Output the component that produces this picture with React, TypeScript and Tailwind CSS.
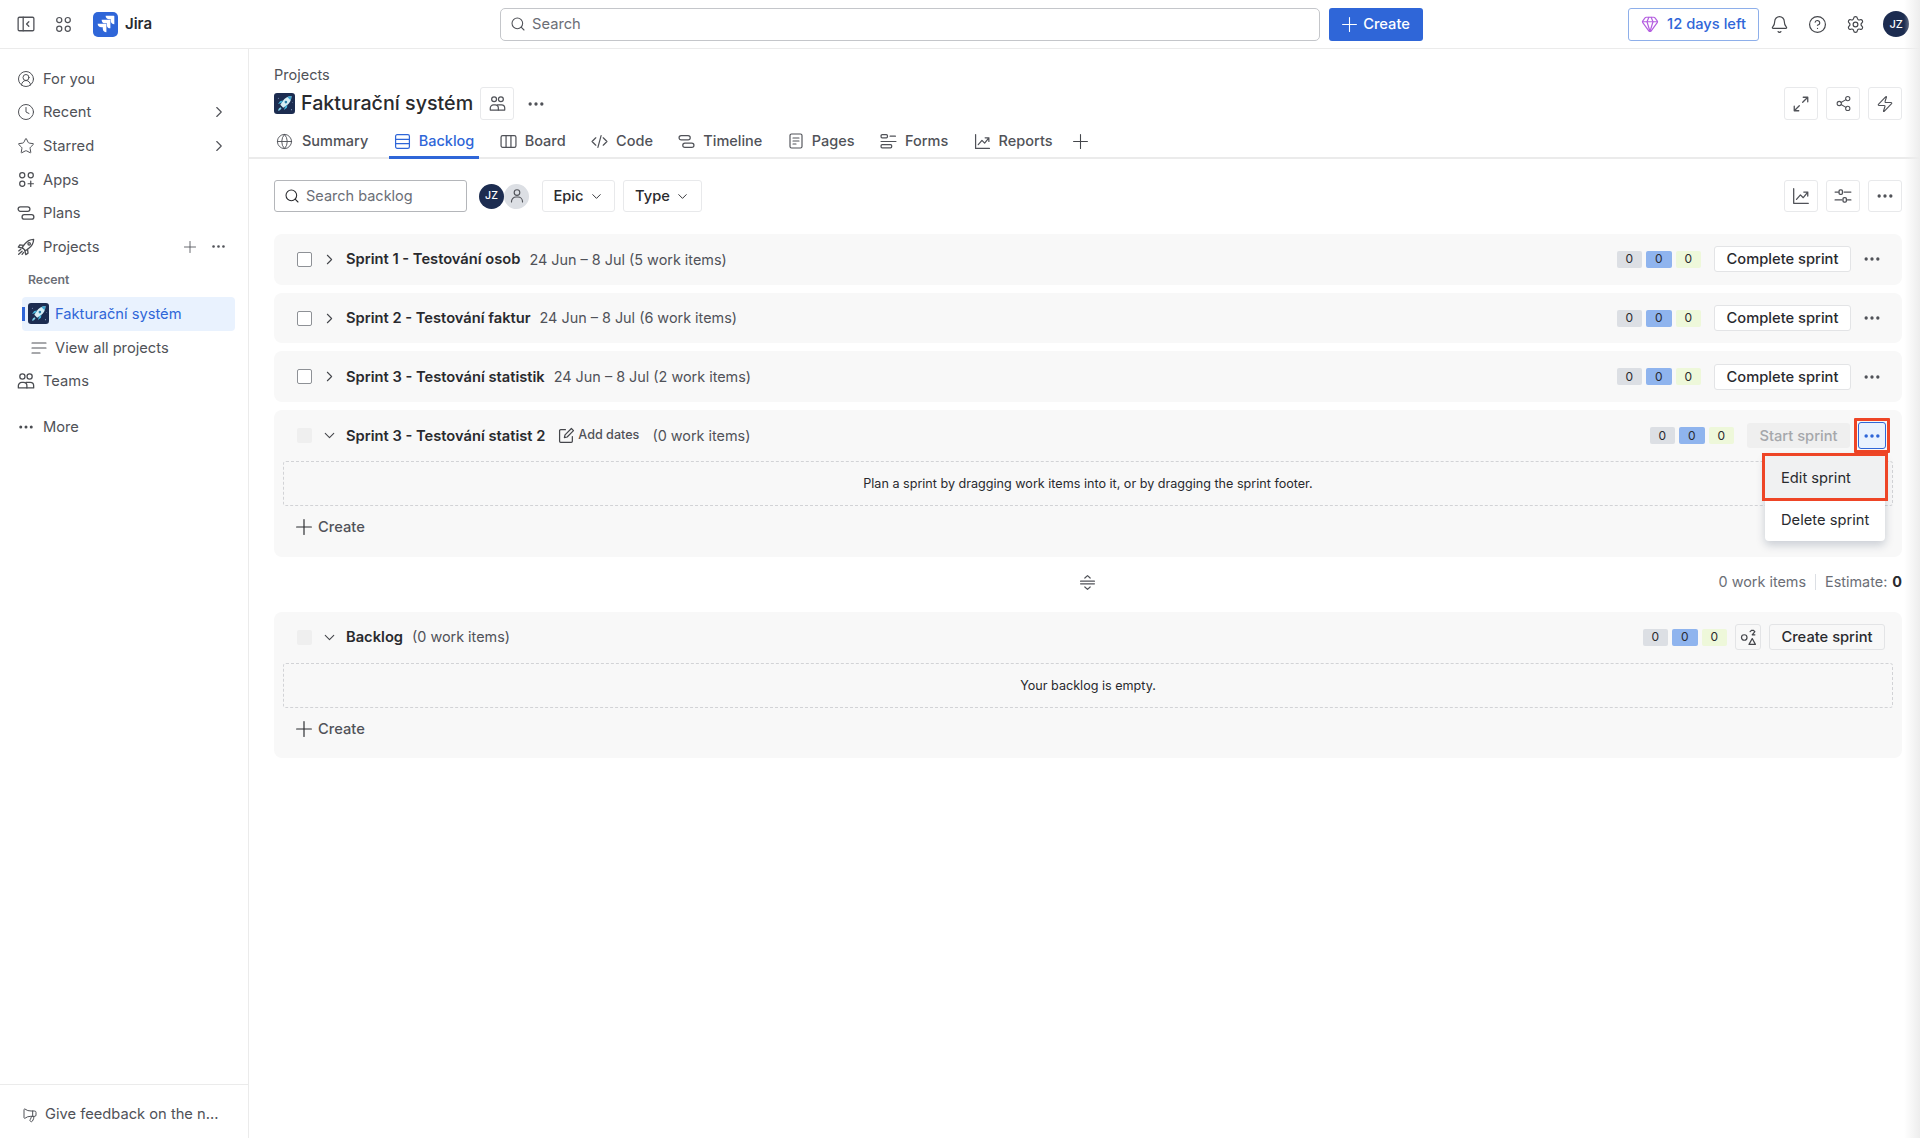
import React from "react";
import { Bell, ChevronDown, ChevronRight, CircleHelp, CircleUserRound, Clock, Ellipsis, Gem, Globe, Search, Settings, Share2, Star, Zap, Megaphone } from "lucide-react";

const S = ({ size = 18, children, className = "" }: { size?: number; children: React.ReactNode; className?: string }) => (
  <svg width={size} height={size} viewBox="0 0 16 16" fill="none" stroke="currentColor" strokeWidth={1.15} strokeLinecap="round" strokeLinejoin="round" className={`shrink-0 ${className}`}>
    {children}
  </svg>
);

const BigPlus = ({ size = 16, className = "" }: { size?: number; className?: string }) => (
  <S size={size} className={className}>
    <path d="M8 .6v14.8M.6 8h14.8" />
  </S>
);

const PeopleIcon = ({ size = 18 }: { size?: number }) => (
  <S size={size}>
    <circle cx="4.8" cy="4" r="2.3" />
    <circle cx="11.2" cy="4" r="2.3" />
    <path d="M1.2 14.2v-1.9a3 3 0 0 1 3-3h1.6a3 3 0 0 1 3 3v1.9z" />
    <path d="M8 9.3h3.8a3 3 0 0 1 3 3v1.9H8.8" />
  </S>
);
const PlansIcon = ({ size = 18 }: { size?: number }) => (
  <S size={size}>
    <rect x="1" y="2.5" width="10.5" height="4" rx="2" />
    <rect x="4.5" y="9.5" width="10.5" height="4" rx="2" />
  </S>
);
const AppsIcon = () => (
  <S size={17}>
    <circle cx="4" cy="4" r="2.4" />
    <circle cx="12" cy="4" r="2.4" />
    <circle cx="4" cy="12" r="2.4" />
    <path d="M12 9.5v5M9.5 12h5" />
  </S>
);
const FourIcon = () => (
  <S size={17}>
    <circle cx="4" cy="3.8" r="2.4" />
    <circle cx="12" cy="3.8" r="2.4" />
    <circle cx="4" cy="12" r="2.4" />
    <circle cx="12" cy="12" r="2.4" />
  </S>
);
const RocketOutline = () => (
  <S size={18}>
    <path d="M14.8 1.2c-3.4.1-6 1.6-8 4.3L4.6 8.4l3 3 2.9-2.2c2.7-2 4.2-4.6 4.3-8z" />
    <path d="M5.8 6.6 2.5 6.2 1.2 8.2l3.7.9M9.4 10.2l.4 3.3-2 1.3-.9-3.7" />
    <circle cx="10.8" cy="5.2" r="1.1" />
    <path d="M1.5 11.5 3.4 10M1.5 14.5l3-2.7M4.5 14.5l1.4-1.7" />
  </S>
);
const RocketTile = ({ size }: { size: number }) => (
  <svg width={size} height={size} viewBox="0 0 24 24" className="shrink-0">
    <rect width="24" height="24" rx="3.5" fill="#1c2c50" />
    <circle cx="5" cy="6" r=".6" fill="#8fa3c7" />
    <circle cx="20" cy="19" r=".6" fill="#8fa3c7" />
    <circle cx="21" cy="11" r=".5" fill="#8fa3c7" />
    <path d="M20 3.5c-4.2.3-7.8 2.4-10 5.7l-2.8 4.3 3.3 3.3 4.3-2.8c3.3-2.2 5-5.8 5.2-10.5z" fill="#d6eef5" />
    <path d="M20 3.5c-1.7.1-3.3.5-4.8 1.2l3.7 3.7c.7-1.5 1-3.1 1.1-4.9z" fill="#3fa4cf" />
    <circle cx="13.6" cy="10.4" r="1.5" fill="#2a7fa8" />
    <path d="M8.6 11.5 4.5 12.6l2.6-3.4 3.4-.5zM12.5 15.4l-1.1 4.1 3.4-2.6.5-3.4z" fill="#48b4d8" />
    <path d="M7.6 16.4c-1.4.4-2.4 1.6-3 3.9 2.3-.5 3.6-1.6 3.9-3z" fill="#7fd0e8" />
  </svg>
);

const NavRow = ({ icon, label, right }: { icon: React.ReactNode; label: string; right?: React.ReactNode }) => (
  <div className="flex h-[33.6px] items-center pl-[17px] pr-[21px]">
    <span className="flex w-[18px] justify-center text-[#4b4d52]">{icon}</span>
    <span className="ml-[8px] text-[14.7px] text-[#505258]">{label}</span>
    <span className="ml-auto flex items-center text-[#505258]">{right}</span>
  </div>
);

const Tab = ({ icon, label, active }: { icon: React.ReactNode; label: string; active?: boolean }) => (
  <div className={`relative flex h-[37px] items-center gap-[8px] px-[5px] pt-[5px] ${active ? "text-[#2f66d8]" : "text-[#505258]"}`}>
    {icon}
    <span className="text-[14.5px] font-medium">{label}</span>
    {active && <span className="absolute inset-x-0 -bottom-[2px] h-[3.5px] bg-[#2f66d8]" />}
  </div>
);

const SquareBtn = ({ children, h = 33 }: { children: React.ReactNode; h?: number }) => (
  <div className={`flex w-[34px] items-center justify-center rounded-[3px] border border-[#e8e9eb] text-[#505258] ${h === 33 ? "h-[33px]" : "h-[32px]"}`}>{children}</div>
);

const Badges = () => (
  <div className="flex gap-[4px] text-[12px] text-[#292a2e]">
    <span className="flex h-[17px] w-[25.5px] items-center justify-center rounded-[2px] bg-[#dcdfe4]">0</span>
    <span className="flex h-[17px] w-[25.5px] items-center justify-center rounded-[2px] bg-[#8fb4ee]">0</span>
    <span className="flex h-[17px] w-[25.5px] items-center justify-center rounded-[2px] bg-[#eef8da]">0</span>
  </div>
);

const Check = ({ off }: { off?: boolean }) => (
  <span className={`block h-[15px] w-[15px] shrink-0 rounded-[2px] ${off ? "bg-[#efefef]" : "border border-[#8e9196] bg-white"}`} />
);

const SprintRow = ({ title, date }: { title: string; date: string }) => (
  <div className="flex h-[50.7px] items-center rounded-[8px] bg-[#f8f8f8] pl-[23px] pr-[16px]">
    <Check />
    <ChevronRight size={17} strokeWidth={1.5} className="ml-[9px] text-[#44464b]" />
    <span className="ml-[8px] text-[14.7px] font-semibold text-[#292a2e]">{title}</span>
    <span className="ml-[9px] text-[14.4px] text-[#505258]">{date}</span>
    <div className="ml-auto"><Badges /></div>
    <div className="ml-[13px] flex h-[26px] w-[137px] items-center justify-center rounded-[3px] border border-[#e3e4e6] bg-white text-[14.7px] font-medium text-[#292a2e]">Complete sprint</div>
    <div className="ml-[7px] flex w-[28px] justify-center text-[#505258]"><Ellipsis size={20} strokeWidth={2} /></div>
  </div>
);

const CreateRow = () => (
  <div className="flex h-[41px] items-center gap-[6px] pl-[22px] text-[#505258]">
    <BigPlus size={16} className="text-[#292a2e]" />
    <span className="text-[14.7px] font-medium">Create</span>
  </div>
);

const DashedBox = ({ text }: { text: string }) => (
  <div className="mx-[9px] flex h-[45px] items-center justify-center rounded-[3px] border-[1.5px] border-dashed border-[#d2d3d6] pt-[1px] text-[12.6px] text-[#292a2e]">{text}</div>
);

export default function App() {
  return (
    <div className="relative flex h-[1138px] w-[1920px] flex-col overflow-hidden bg-white [font-family:Inter,sans-serif]">
      {/* top bar */}
      <header className="relative flex h-[49px] shrink-0 items-center border-b border-[#ebebeb]">
        <div className="ml-[17px] text-[#505258]">
          <S size={18}>
            <rect x="1" y="2" width="14" height="12" rx="1.2" />
            <path d="M5.5 2v12M10.5 6 8.5 8l2 2" />
          </S>
        </div>
        <div className="ml-[20px] text-[#505258]"><FourIcon /></div>
        <div className="ml-[21px] flex h-[25px] w-[25px] items-center justify-center rounded-[5px] bg-[#2f66d8]">
          <svg width="20" height="20" viewBox="0 0 24 24" fill="#fff">
            <path d="M11.53 2c0 2.4 1.97 4.35 4.35 4.35h1.78v1.7c0 2.4 1.94 4.34 4.34 4.35V2.84A.84.84 0 0 0 21.16 2H11.53Z" />
            <path d="M6.77 6.8a4.36 4.36 0 0 0 4.34 4.34h1.8v1.72a4.36 4.36 0 0 0 4.34 4.34V7.63a.84.84 0 0 0-.83-.83H6.77Z" />
            <path d="M2 11.6c0 2.4 1.95 4.34 4.35 4.34h1.78v1.72c.01 2.39 1.95 4.33 4.34 4.34v-9.57a.84.84 0 0 0-.84-.84H2Z" />
          </svg>
        </div>
        <span className="ml-[7px] text-[15px] font-semibold text-[#292a2e]">Jira</span>
        <div className="ml-[348px] flex h-[33px] w-[820px] items-center rounded-[5px] border border-[#c4c6ca] pl-[9px] text-[#505258]">
          <Search size={16} strokeWidth={1.6} />
          <span className="ml-[6px] text-[14.7px] text-[#6b6e76]">Search</span>
        </div>
        <div className="ml-[9px] flex h-[33px] w-[94px] items-center justify-center gap-[6px] rounded-[3px] bg-[#2f66d8] text-white">
          <BigPlus size={15} />
          <span className="text-[14.7px] font-medium">Create</span>
        </div>
        <div className="ml-[205px] flex h-[33px] w-[131px] items-center justify-center gap-[8px] rounded-[3px] border border-[#8eafea] text-[#2f66d8]">
          <Gem size={18} strokeWidth={1.6} className="text-[#b45ee0]" />
          <span className="text-[14.7px] font-medium">12 days left</span>
        </div>
        <Bell size={19} strokeWidth={1.5} className="ml-[11px] text-[#44464b]" />
        <CircleHelp size={19} strokeWidth={1.5} className="ml-[19px] text-[#44464b]" />
        <Settings size={19} strokeWidth={1.5} className="ml-[19px] text-[#44464b]" />
        <div className="ml-[18px] flex h-[26px] w-[26px] items-center justify-center rounded-full bg-[#1c2c50] text-[11px] font-medium text-white">JZ</div>
      </header>

      <div className="flex min-h-0 flex-1">
        {/* sidebar */}
        <aside className="flex w-[249px] shrink-0 flex-col border-r border-[#ebebeb] pt-[13px]">
          <NavRow icon={<CircleUserRound size={18} strokeWidth={1.3} />} label="For you" />
          <NavRow icon={<Clock size={18} strokeWidth={1.3} />} label="Recent" right={<ChevronRight size={18} strokeWidth={1.5} className="-mr-[1px]" />} />
          <NavRow icon={<Star size={18} strokeWidth={1.3} />} label="Starred" right={<ChevronRight size={18} strokeWidth={1.5} className="-mr-[1px]" />} />
          <NavRow icon={<AppsIcon />} label="Apps" />
          <NavRow icon={<PlansIcon />} label="Plans" />
          <NavRow
            icon={<RocketOutline />}
            label="Projects"
            right={
              <span className="flex items-center gap-[14px]">
                <BigPlus size={12} />
                <Ellipsis size={17} strokeWidth={1.8} />
              </span>
            }
          />
          <div className="flex h-[33.6px] items-center pl-[28px] text-[12.3px] font-semibold text-[#6b6e76]">Recent</div>
          <div className="relative ml-[22px] flex h-[33.6px] w-[213px] items-center rounded-[4px] bg-[#e9f2fe] pl-[6px]">
            <span className="absolute left-0 top-[10px] h-[14px] w-[2.5px] bg-[#2f66d8]" />
            <RocketTile size={21} />
            <span className="ml-[6px] text-[14.7px] text-[#2f66d8]">Fakturační systém</span>
          </div>
          <div className="flex h-[33.6px] items-center pl-[31px] text-[#505258]">
            <S size={16}>
              <path d="M1 3h14M1 8h14M1 13h8" />
            </S>
            <span className="ml-[8px] text-[14.7px]">View all projects</span>
          </div>
          <NavRow icon={<PeopleIcon />} label="Teams" />
          <div className="mt-[12px]">
            <NavRow icon={<Ellipsis size={18} strokeWidth={2} />} label="More" />
          </div>
          <div className="mt-auto flex h-[54px] items-center border-t border-[#ebebeb] pl-[22px] pt-[6px] text-[#505258]">
            <Megaphone size={16} strokeWidth={1.5} className="-scale-x-100" />
            <span className="ml-[7px] text-[14.7px]">Give feedback on the n...</span>
          </div>
        </aside>

        {/* main */}
        <main className="flex min-w-0 flex-1 flex-col">
          <div className="pl-[25px] pr-[18px] pt-[16px]">
            <div className="h-[20px] text-[14.5px] leading-[20px] text-[#505258]">Projects</div>
            <div className="mt-[2px] flex h-[33px] items-center">
              <RocketTile size={21} />
              <span className="ml-[6px] text-[19.7px] font-medium text-[#292a2e]">Fakturační systém</span>
              <div className="ml-[7px]"><SquareBtn><PeopleIcon size={17} /></SquareBtn></div>
              <Ellipsis size={20} strokeWidth={2} className="ml-[12px] text-[#505258]" />
              <div className="ml-auto flex gap-[8px]">
                <SquareBtn>
                  <S size={18}>
                    <path d="M9.5 6.5 14 2M10 2h4v4M6.5 9.5 2 14M2 10v4h4" />
                  </S>
                </SquareBtn>
                <SquareBtn><Share2 size={17} strokeWidth={1.5} /></SquareBtn>
                <SquareBtn><Zap size={18} strokeWidth={1.5} /></SquareBtn>
              </div>
            </div>
          </div>

          <div className="flex border-b-2 border-[#ebebeb] pl-[22px]">
            <div className="flex gap-[15.4px]">
              <div className="relative flex h-[37px] items-center gap-[9px] px-[5px] pt-[5px] text-[#505258]">
                <Globe size={17} strokeWidth={1.3} />
                <span className="text-[14.5px] font-medium">Summary</span>
              </div>
              <Tab active icon={<S size={17}><rect x="1.5" y="1.5" width="13" height="13" rx="1.5" /><path d="M1.5 6h13M1.5 10h13" /></S>} label="Backlog" />
              <Tab icon={<S size={17}><rect x="1" y="2.5" width="14" height="11" rx="1.5" /><path d="M5.7 2.5v11M10.3 2.5v11" /></S>} label="Board" />
              <Tab icon={<S size={17}><path d="M4.5 4.5 1 8l3.5 3.5M11.5 4.5 15 8l-3.5 3.5M9.5 2.5l-3 11" /></S>} label="Code" />
              <Tab icon={<PlansIcon size={17} />} label="Timeline" />
              <Tab icon={<S size={16}><rect x="2" y="1" width="12" height="14" rx="1.5" /><path d="M5 5h6M5 8h6M5 11h3" /></S>} label="Pages" />
              <Tab icon={<S size={17}><rect x="1" y="1.5" width="6" height="3" rx="1" /><path d="M9.5 3h5M1 8h14" /><rect x="1" y="11" width="10" height="3" rx="1" /></S>} label="Forms" />
              <Tab icon={<S size={17}><path d="M1.5 1.5v13h13M4 11l3.5-4 2.5 2.5L14 4.5M10.5 4.5H14V8" /></S>} label="Reports" />
              <div className="flex h-[37px] items-center pt-[5px] text-[#44464b]"><BigPlus size={15} /></div>
            </div>
          </div>

          <div className="pl-[25px] pr-[18px]">
            {/* toolbar */}
            <div className="mt-[21px] flex h-[32px] items-center">
              <div className="flex h-[32px] w-[193px] items-center rounded-[3px] border border-[#b4b6ba] pl-[9px]">
                <Search size={16} strokeWidth={1.6} className="text-[#292a2e]" />
                <span className="ml-[6px] text-[14.5px] text-[#6b6e76]">Search backlog</span>
              </div>
              <div className="z-10 ml-[12px] flex h-[25px] w-[25px] items-center justify-center rounded-full bg-[#1c2c50] text-[10.5px] font-medium text-white">JZ</div>
              <div className="flex h-[25px] w-[25px] items-center justify-center rounded-full bg-[#dcdfe4] text-[#505258]">
                <S size={16}>
                  <circle cx="8" cy="4.5" r="2.8" />
                  <path d="M2.5 14v-.5a4.5 4.5 0 0 1 4.5-4.5h2a4.5 4.5 0 0 1 4.5 4.5v.5" />
                </S>
              </div>
              <div className="ml-[13px] flex h-[32px] w-[73px] items-center justify-center gap-[5px] rounded-[3px] border border-[#e8e9eb] text-[14.7px] font-medium text-[#292a2e]">
                Epic <ChevronDown size={15} strokeWidth={1.5} />
              </div>
              <div className="ml-[8px] flex h-[32px] w-[79px] items-center justify-center gap-[5px] rounded-[3px] border border-[#e8e9eb] text-[14.7px] font-medium text-[#292a2e]">
                Type <ChevronDown size={15} strokeWidth={1.5} />
              </div>
              <div className="ml-auto flex gap-[8px]">
                <SquareBtn h={32}>
                  <S size={18}>
                    <path d="M1.5 1.5v13h13M4 11l3.5-4 2.5 2.5L14 4.5M10.5 4.5H14V8" />
                  </S>
                </SquareBtn>
                <SquareBtn h={32}>
                  <S size={18}>
                    <path d="M1 4.5h3M9 4.5h6M1 11.5h6M12 11.5h3" />
                    <rect x="4.5" y="2.5" width="3" height="4" rx="1" />
                    <rect x="8" y="9.5" width="3" height="4" rx="1" />
                  </S>
                </SquareBtn>
                <SquareBtn h={32}><Ellipsis size={20} strokeWidth={2} /></SquareBtn>
              </div>
            </div>

            {/* sprints */}
            <div className="mt-[22px] flex flex-col gap-[8px]">
              <SprintRow title="Sprint 1 - Testování osob" date="24 Jun – 8 Jul (5 work items)" />
              <SprintRow title="Sprint 2 - Testování faktur" date="24 Jun – 8 Jul (6 work items)" />
              <SprintRow title="Sprint 3 - Testování statistik" date="24 Jun – 8 Jul (2 work items)" />

              <div className="h-[147px] rounded-[8px] bg-[#f8f8f8]">
                <div className="flex h-[51px] items-center pl-[23px] pr-[16px]">
                  <Check off />
                  <ChevronDown size={17} strokeWidth={1.5} className="ml-[9px] text-[#44464b]" />
                  <span className="ml-[8px] text-[14.7px] font-semibold text-[#292a2e]">Sprint 3 - Testování statist 2</span>
                  <S size={17} className="ml-[13px] text-[#44464b]">
                    <path d="M7 2.5H2.5a1 1 0 0 0-1 1v10a1 1 0 0 0 1 1h10a1 1 0 0 0 1-1V9" />
                    <path d="m6 10 .6-2.6 6-6 2 2-6 6z" />
                  </S>
                  <span className="ml-[3px] text-[12.6px] font-medium text-[#505258]">Add dates</span>
                  <span className="ml-[13px] text-[14.4px] text-[#505258]">(0 work items)</span>
                  <div className="ml-auto"><Badges /></div>
                  <div className="ml-[13px] flex h-[25px] w-[103px] items-center justify-center rounded-[3px] bg-[#efefef] text-[14.7px] font-medium text-[#a5a7ab]">Start sprint</div>
                  <div className="relative ml-[8px] flex h-[27px] w-[28px] items-center justify-center rounded-[3px] border border-[#2f66d8] bg-[#e9f2fe] text-[#2f66d8]">
                    <Ellipsis size={20} strokeWidth={2.2} />
                    <span className="absolute -inset-x-[5px] -inset-y-[5px] rounded-[1px] border-[3px] border-[#ee4526]" />
                    <div className="absolute right-[0px] top-[32px] z-20 flex w-[120px] flex-col rounded-[4px] bg-white text-[14.7px] text-[#292a2e] shadow-[0_4px_10px_rgba(9,30,66,0.2)]">
                      <div className="relative flex h-[45px] items-center rounded-t-[4px] bg-[#f0f1f2] pl-[16px] pt-[1px]">
                        Edit sprint
                        <span className="absolute -inset-x-[3px] -bottom-[1px] -top-[2px] border-[3px] border-[#ee4526]" />
                      </div>
                      <div className="flex h-[41px] items-center pb-[2px] pl-[16px]">Delete sprint</div>
                    </div>
                  </div>
                </div>
                <DashedBox text="Plan a sprint by dragging work items into it, or by dragging the sprint footer." />
                <CreateRow />
              </div>
            </div>

            {/* total line */}
            <div className="grid h-[55px] grid-cols-3 items-center pb-[5px]">
              <div />
              <div className="flex justify-center text-[#505258]">
                <S size={17}>
                  <path d="M1.5 6.8h13M1.5 9.2h13M5.5 3.8 8 1.5l2.5 2.3M5.5 12.2 8 14.5l2.5-2.3" />
                </S>
              </div>
              <div className="flex items-center justify-end text-[14.4px] text-[#6b6e76]">
                0 work items
                <span className="mx-[9px] h-[16px] w-px bg-[#dcdfe4]" />
                Estimate:<span className="ml-[5px] font-bold text-[#292a2e]">0</span>
              </div>
            </div>

            {/* backlog */}
            <div className="h-[146px] rounded-[8px] bg-[#f8f8f8]">
              <div className="flex h-[50px] items-center pl-[23px] pr-[17px]">
                <Check off />
                <ChevronDown size={17} strokeWidth={1.5} className="ml-[9px] text-[#44464b]" />
                <span className="ml-[8px] text-[14.7px] font-semibold text-[#292a2e]">Backlog</span>
                <span className="ml-[9px] text-[14.4px] text-[#505258]">(0 work items)</span>
                <div className="ml-auto"><Badges /></div>
                <div className="ml-[8px] flex h-[26px] w-[26px] items-center justify-center rounded-[3px] border border-[#e3e4e6] text-[#44464b]">
                  <S size={17}>
                    <circle cx="4" cy="8" r="2.6" />
                    <path d="M9.5 2.5 11 1.2h1.5L14 2.5 11.5 5.5H14M8.5 14.5 11.5 9l3 5.5z" />
                  </S>
                </div>
                <div className="ml-[8px] flex h-[26px] w-[116px] items-center justify-center rounded-[3px] border border-[#e3e4e6] text-[14.7px] font-medium text-[#292a2e]">Create sprint</div>
              </div>
              <div className="h-[1px]" />
              <DashedBox text="Your backlog is empty." />
              <CreateRow />
            </div>
          </div>
        </main>
      </div>

      {/* right edge shade */}
      <div className="pointer-events-none absolute inset-y-0 right-0 w-[16px] bg-gradient-to-l from-[#ededed] to-transparent" />
    </div>
  );
}
